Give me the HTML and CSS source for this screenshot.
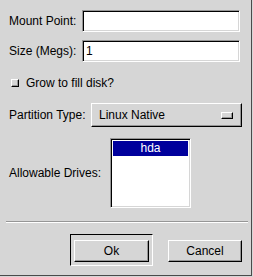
FILE: index.html
```html
<!DOCTYPE html>
<html lang="en">
<head>
  <meta charset="UTF-8">
  <title>Add Partition</title>
  <link rel="stylesheet" href="styles.css">
</head>
<body>
  <div class="dialog">
    <!-- Mount point and size entries -->
    <div class="entries">
      <label for="mount">Mount Point:</label>
      <input type="text" id="mount" class="entry">
      <label for="size">Size (Megs):</label>
      <input type="text" id="size" class="entry" value="1">
    </div>

    <div class="check-row">
      <span class="check-box"></span>
      <span>Grow to fill disk?</span>
    </div>

    <div class="option-row">
      <span class="row-label">Partition Type:</span>
      <button class="option-menu">
        <span>Linux Native</span>
        <span class="option-indicator"></span>
      </button>
    </div>

    <div class="drives-row">
      <span class="row-label drives-label">Allowable Drives:</span>
      <div class="drive-list">
        <div class="drive-item selected">hda</div>
      </div>
    </div>

    <div class="separator"></div>

    <div class="button-row">
      <div class="default-frame">
        <button class="btn">Ok</button>
      </div>
      <button class="btn btn-cancel">Cancel</button>
    </div>
  </div>
</body>
</html>
```
FILE: styles.css
```css
body {
  margin: 0;
  padding: 0;
  background-color: #d6d6d6;
  font-family: "Liberation Sans", Arial, sans-serif;
  font-size: 12px;
  color: #000;
}
.dialog {
  width: 252px;
  height: 276px;
  box-sizing: border-box;
  border-right: 1px solid #4a4a4a;
  border-bottom: 1px solid #4a4a4a;
  padding-top: 10px;
}
.entries {
  display: grid;
  grid-template-columns: 73px 158px;
  grid-auto-rows: 22px;
  row-gap: 8px;
  align-items: center;
  padding-left: 9px;
}
.entry {
  appearance: none;
  margin: 0;
  width: 158px;
  height: 22px;
  box-sizing: border-box;
  border: 1px solid;
  border-color: #969696 #ffffff #ffffff #969696;
  box-shadow: inset 1px 1px 0 #000, inset -1px -1px 0 #d6d6d6;
  background: #fff;
  font: inherit;
  padding: 0 3px;
  outline: none;
}
.check-row {
  display: flex;
  align-items: center;
  height: 16px;
  margin-top: 13px;
  padding-left: 11px;
}
.check-box {
  width: 8px;
  height: 8px;
  box-sizing: border-box;
  border: 1px solid;
  border-color: #fff #000 #000 #fff;
  box-shadow: inset -1px -1px 0 #969696;
  margin-right: 7px;
}
.option-row {
  display: flex;
  align-items: center;
  height: 24px;
  margin-top: 12px;
  padding-left: 9px;
}
.row-label {
  flex: none;
}
.option-menu {
  margin-left: auto;
  margin-right: 9px;
  width: 151px;
  height: 24px;
  box-sizing: border-box;
  display: flex;
  align-items: center;
  justify-content: space-between;
  padding: 0 8px 0 7px;
  background: #d6d6d6;
  border: 1px solid;
  border-color: #fff #000 #000 #fff;
  box-shadow: inset -1px -1px 0 #969696;
  font: inherit;
  color: #000;
}
.option-indicator {
  width: 12px;
  height: 7px;
  box-sizing: border-box;
  border: 1px solid;
  border-color: #fff #000 #000 #fff;
  box-shadow: inset -1px -1px 0 #969696;
}
.drives-row {
  display: flex;
  align-items: center;
  margin-top: 11px;
  padding-left: 9px;
}
.drives-label {
  width: 101px;
}
.drive-list {
  width: 81px;
  height: 70px;
  box-sizing: border-box;
  border: 1px solid;
  border-color: #969696 #fff #fff #969696;
  box-shadow: inset 1px 1px 0 #000, inset -1px -1px 0 #d6d6d6;
  background: #fff;
  padding: 2px;
}
.drive-item {
  height: 15px;
  line-height: 15px;
  text-align: center;
}
.drive-item.selected {
  background: #00009c;
  color: #fff;
}
.separator {
  margin: 13px 0 0 6px;
  width: 242px;
  height: 0;
  border-top: 1px solid #969696;
  border-bottom: 1px solid #fff;
}
.button-row {
  display: flex;
  align-items: flex-start;
  margin-top: 11px;
  padding-left: 70px;
}
.default-frame {
  width: 83px;
  height: 32px;
  box-sizing: border-box;
  border: 1px solid;
  border-color: #000 #fff #fff #000;
  padding: 5px 0 0 3px;
}
.btn {
  width: 75px;
  height: 22px;
  box-sizing: border-box;
  margin: 0;
  padding: 0;
  background: #d6d6d6;
  border: 1px solid;
  border-color: #fff #000 #000 #fff;
  box-shadow: inset -1px -1px 0 #969696;
  font: inherit;
  color: #000;
}
.btn-cancel {
  width: 74px;
  margin-top: 6px;
  margin-left: 15px;
}
```
